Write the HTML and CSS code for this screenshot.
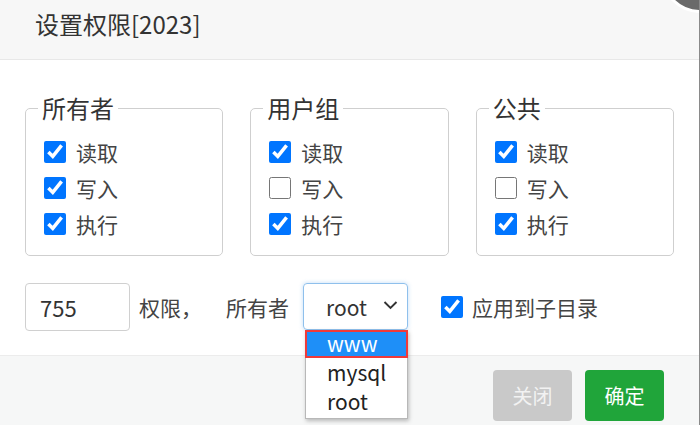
FILE: index.html
```html
<!DOCTYPE html>
<html lang="zh-CN">
<head>
<meta charset="utf-8">
<title>设置权限</title>
<link rel="stylesheet" href="styles.css">
</head>
<body>
<div class="modal">
  <div class="close-btn"></div>
  <div class="header">设置权限[2023]</div>
  <div class="content">
    <div class="groups">
      <fieldset class="group">
        <legend>所有者</legend>
        <label class="check"><input type="checkbox" checked><span>读取</span></label>
        <label class="check"><input type="checkbox" checked><span>写入</span></label>
        <label class="check"><input type="checkbox" checked><span>执行</span></label>
      </fieldset>
      <fieldset class="group">
        <legend>用户组</legend>
        <label class="check"><input type="checkbox" checked><span>读取</span></label>
        <label class="check"><input type="checkbox"><span>写入</span></label>
        <label class="check"><input type="checkbox" checked><span>执行</span></label>
      </fieldset>
      <fieldset class="group">
        <legend>公共</legend>
        <label class="check"><input type="checkbox" checked><span>读取</span></label>
        <label class="check"><input type="checkbox"><span>写入</span></label>
        <label class="check"><input type="checkbox" checked><span>执行</span></label>
      </fieldset>
    </div>
    <div class="bottom">
      <input class="num" type="text" value="755">
      <span class="txt">权限，</span>
      <span class="txt owner">所有者</span>
      <div class="select-wrap">
        <div class="select">
          <span>root</span>
          <svg class="chev" width="15" height="10" viewBox="0 0 15 10"><polyline points="1.5,2 7.5,8 13.5,2" fill="none" stroke="#333" stroke-width="1.9"/></svg>
        </div>
        <ul class="dropdown">
          <li class="active">www</li>
          <li>mysql</li>
          <li>root</li>
        </ul>
      </div>
      <label class="check apply"><input type="checkbox" checked><span>应用到子目录</span></label>
    </div>
  </div>
  <div class="footer">
    <button class="btn btn-gray">关闭</button>
    <button class="btn btn-green">确定</button>
  </div>
</div>
</body>
</html>
```
FILE: styles.css
```css
html, body {
  margin: 0;
  padding: 0;
  background: #fff;
}
body {
  font-family: "Noto Sans CJK SC", "Noto Sans", sans-serif;
  color: #333;
}
.modal {
  position: relative;
  width: 699px;
  height: 425px;
  border-right: 1px solid #8a8a8a;
  overflow: hidden;
  background: #fff;
}
.close-btn {
  position: absolute;
  left: 661px;
  top: -65px;
  width: 72px;
  height: 72px;
  border-radius: 50%;
  background: #6a6a6a;
  border: 3px solid #fff;
  z-index: 5;
}
.header {
  height: 59px;
  background: #f7f7f7;
  border-bottom: 1px solid #e8e8e8;
  padding-left: 35px;
  font-size: 24px;
  line-height: 48px;
  color: #333;
}
.content {
  padding: 35px 25px 24px;
}
.groups {
  display: grid;
  grid-template-columns: repeat(3, 1fr);
  column-gap: 27px;
}
.group {
  margin: 0;
  padding: 0 18px 13px;
  border: 1px solid #cfcfcf;
  border-radius: 5px;
  min-width: 0;
}
.group legend {
  margin-left: -6px;
  padding: 0 4px;
  font-size: 24px;
  line-height: 26px;
  color: #333;
}
.group legend + .check {
  margin-top: 13px;
}
.check {
  display: flex;
  align-items: center;
  height: 36px;
  gap: 10px;
  font-size: 21px;
  color: #444;
}
.check input {
  width: 22px;
  height: 22px;
  margin: 0;
  accent-color: #0075ff;
}
.bottom {
  display: flex;
  align-items: center;
  height: 48px;
  margin-top: 27px;
}
.num {
  box-sizing: border-box;
  width: 105px;
  height: 48px;
  margin: 0;
  padding: 0 0 0 14px;
  border: 1px solid #d0d0d0;
  border-radius: 4px;
  font-family: inherit;
  font-size: 22px;
  color: #333;
  outline: none;
}
.txt {
  font-size: 21px;
  color: #444;
  margin-left: 9px;
}
.owner {
  margin-left: 24px;
}
.select-wrap {
  position: relative;
  margin-left: 14px;
}
.select {
  box-sizing: border-box;
  width: 105px;
  height: 47px;
  margin-top: -1px;
  border: 1px solid #8fc0ec;
  border-radius: 4px;
  box-shadow: 0 0 4px rgba(120, 180, 240, 0.45);
  display: flex;
  align-items: center;
  justify-content: space-between;
  padding: 0 9px 0 22px;
  font-size: 21px;
  color: #333;
}
.chev {
  display: block;
  margin-top: -3px;
}
.dropdown {
  position: absolute;
  left: 2px;
  top: 46px;
  width: 103px;
  box-sizing: border-box;
  margin: 0;
  padding: 0 0 2px;
  list-style: none;
  background: #fff;
  border: 1px solid #b8b8b8;
  border-top: none;
  box-shadow: 1px 2px 4px rgba(0, 0, 0, 0.25);
  z-index: 4;
}
.dropdown li {
  height: 29px;
  line-height: 29px;
  padding-left: 21px;
  font-size: 21px;
  color: #222;
}
.dropdown li.active {
  height: 28px;
  line-height: 26px;
  margin: 0 -1px;
  padding-left: 22px;
  background: #1e8ff8;
  color: #fff;
  box-shadow: inset 0 0 0 2px #f03a3a;
}
.apply {
  margin-left: 33px;
  gap: 9px;
}
.footer {
  height: 70px;
  background: #f6f7f7;
  border-top: 1px solid #ececec;
  display: flex;
  justify-content: flex-end;
  align-items: flex-start;
  gap: 13px;
  padding: 14px 35px 0 0;
  box-sizing: border-box;
}
.btn {
  width: 79px;
  height: 51px;
  border: none;
  border-radius: 4px;
  font-family: inherit;
  font-size: 20px;
  color: #fff;
  padding: 0;
}
.btn-gray {
  background: #c9c9c9;
  color: #f2f2f2;
}
.btn-green {
  background: #20a53a;
}
```
